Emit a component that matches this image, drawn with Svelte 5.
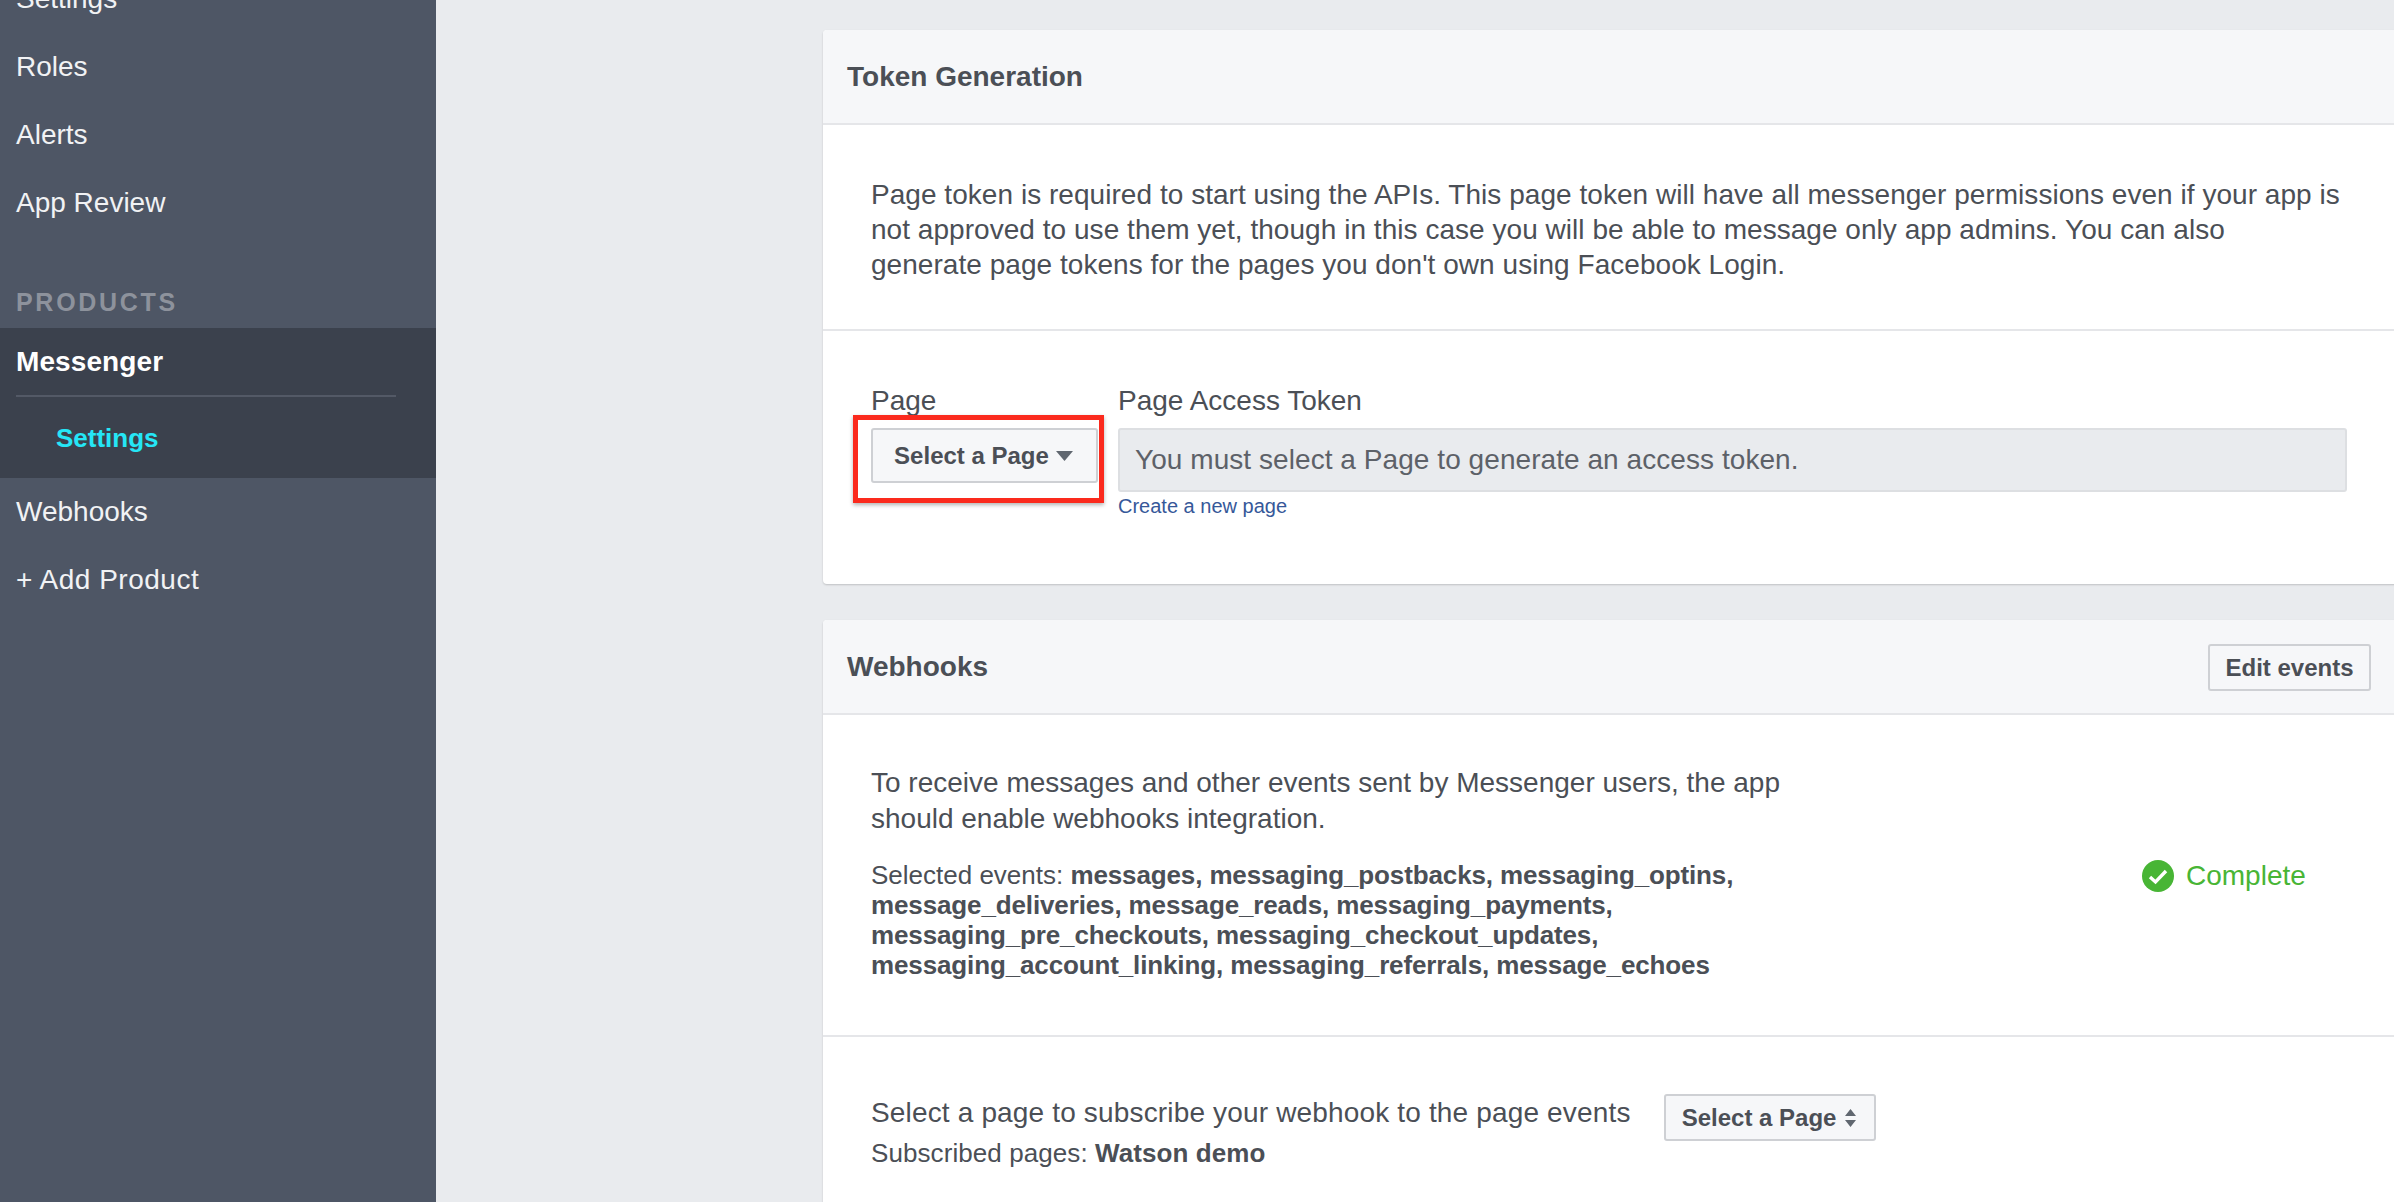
<script>
  const navTop = ['Settings', 'Roles', 'Alerts', 'App Review'];
  const navBottom = ['Webhooks', '+ Add Product'];
</script>

<div class="page">
  <aside class="sidebar">
    <ul class="nav nav-top">
      {#each navTop as item}
        <li>{item}</li>
      {/each}
    </ul>
    <div class="nav-heading">PRODUCTS</div>
    <div class="active-group">
      <div class="active-title">Messenger</div>
      <div class="active-sub">Settings</div>
    </div>
    <ul class="nav nav-bottom">
      {#each navBottom as item}
        <li>{item}</li>
      {/each}
    </ul>
  </aside>

  <main class="main">
    <section class="card token-card">
      <header class="card-head">
        <h2>Token Generation</h2>
      </header>
      <div class="intro">
        <p>Page token is required to start using the APIs. This page token will have all messenger permissions even if your app is not approved to use them yet, though in this case you will be able to message only app admins. You can also generate page tokens for the pages you don't own using Facebook Login.</p>
      </div>
      <div class="token-row">
        <div class="page-col">
          <div class="field-label">Page</div>
          <div class="marked">
            <button class="btn select-main">
              Select a Page
              <svg width="17" height="10" viewBox="0 0 17 10"><path d="M0 0h17L8.5 10z" fill="#606770" /></svg>
            </button>
            <span class="red-mark"></span>
          </div>
        </div>
        <div class="token-col">
          <div class="field-label">Page Access Token</div>
          <div class="token-input">You must select a Page to generate an access token.</div>
          <a class="new-page" href="#new">Create a new page</a>
        </div>
      </div>
    </section>

    <section class="card hooks-card">
      <header class="card-head">
        <h2>Webhooks</h2>
        <button class="btn edit">Edit events</button>
      </header>
      <div class="hooks-info">
        <div class="hooks-text">
          <p class="lead">To receive messages and other events sent by Messenger users, the app should enable webhooks integration.</p>
          <p class="events">Selected events: <b>messages, messaging_postbacks, messaging_optins, message_deliveries, message_reads, messaging_payments, messaging_pre_checkouts, messaging_checkout_updates, messaging_account_linking, messaging_referrals, message_echoes</b></p>
        </div>
        <div class="status">
          <svg width="32" height="32" viewBox="0 0 32 32">
            <circle cx="16" cy="16" r="16" fill="#48b535" />
            <path d="M8 17l5.5 5L24 11" fill="none" stroke="#fff" stroke-width="3.4" />
          </svg>
          <span>Complete</span>
        </div>
      </div>
      <div class="subscribe">
        <div class="subscribe-text">
          <div class="subscribe-line">Select a page to subscribe your webhook to the page events</div>
          <p class="subscribed">Subscribed pages: <b>Watson demo</b></p>
        </div>
        <button class="btn select-small">
          Select a Page
          <svg width="13" height="18" viewBox="0 0 13 18"><path d="M6.5 0l5.5 7H1zM6.5 18L1 11h11z" fill="#606770" /></svg>
        </button>
      </div>
    </section>
  </main>
</div>

<style>
  :global(body) {
    margin: 0;
    overflow: hidden;
  }

  .page {
    display: flex;
    width: 2394px;
    height: 1202px;
    overflow: hidden;
    background: #e9ebee;
    color: #4b4f56;
    font-family: "Liberation Sans", Arial, sans-serif;
  }

  .sidebar {
    flex: 0 0 436px;
    background: #4e5665;
    color: #f1f2f4;
    font-size: 28px;
    overflow: hidden;
  }

  .nav {
    margin: 0;
    padding: 0;
    list-style: none;
  }

  .nav-top {
    margin-top: -35px;
  }

  .nav li {
    display: flex;
    align-items: center;
    height: 68px;
    padding-left: 16px;
  }

  .nav-bottom li:last-child {
    letter-spacing: 0.5px;
  }

  .nav-heading {
    margin-top: 50px;
    padding-left: 16px;
    height: 41px;
    font-size: 25px;
    line-height: 30px;
    font-weight: 700;
    letter-spacing: 2.7px;
    color: #8d929c;
  }

  .active-group {
    background: #3b414d;
    height: 150px;
  }

  .active-title {
    margin: 0 40px 0 16px;
    height: 67px;
    line-height: 68px;
    font-weight: 700;
    letter-spacing: 0.1px;
    color: #fff;
    border-bottom: 2px solid #535966;
  }

  .active-sub {
    padding-left: 56px;
    margin-top: 26px;
    font-size: 26px;
    line-height: 30px;
    font-weight: 700;
    color: #25e6f6;
  }

  .main {
    flex: 0 0 auto;
    padding: 30px 0 0 387px;
  }

  .card {
    width: 1575px;
    background: #fff;
    border-radius: 4px 0 0 4px;
    box-shadow: 0 1px 2px rgba(0, 0, 0, 0.18);
  }

  .token-card {
    margin-bottom: 36px;
  }

  .hooks-card {
    min-height: 700px;
  }

  .card-head {
    display: flex;
    align-items: center;
    justify-content: space-between;
    box-sizing: border-box;
    height: 95px;
    padding: 0 27px 0 24px;
    background: #f6f7f9;
    border-bottom: 2px solid #e5e6e9;
    border-radius: 4px 0 0 0;
  }

  .card-head h2 {
    margin: 0;
    font-size: 28px;
    font-weight: 700;
    color: #4b4f56;
  }

  .intro {
    box-sizing: border-box;
    height: 206px;
    padding: 52px 24px 0 48px;
    border-bottom: 2px solid #e5e6e9;
  }

  .intro p {
    width: 1472px;
    margin: 0;
    font-size: 28px;
    line-height: 35px;
    letter-spacing: 0.04px;
  }

  .token-row {
    display: flex;
    box-sizing: border-box;
    height: 253px;
    padding: 52px 0 0 48px;
  }

  .page-col {
    width: 247px;
  }

  .field-label {
    height: 45px;
    font-size: 28px;
    line-height: 36px;
  }

  .marked {
    position: relative;
    width: 227px;
  }

  .btn {
    box-sizing: border-box;
    display: flex;
    align-items: center;
    justify-content: center;
    padding: 0;
    background: #f6f7f9;
    border: 2px solid #ced0d4;
    border-radius: 3px;
    font-family: inherit;
    font-size: 24px;
    font-weight: 700;
    color: #4b4f56;
  }

  .select-main {
    width: 227px;
    height: 55px;
    gap: 7px;
    padding-right: 2px;
  }

  .red-mark {
    position: absolute;
    left: -18px;
    top: -13px;
    width: 251px;
    height: 88px;
    box-sizing: border-box;
    border: 5px solid #fb2a1d;
    box-shadow: 0 2px 4px rgba(0, 0, 0, 0.3);
  }

  .token-col {
    width: 1229px;
  }

  .token-input {
    box-sizing: border-box;
    height: 64px;
    padding: 0 15px;
    line-height: 60px;
    font-size: 28px;
    letter-spacing: 0.06px;
    background: #e9ebee;
    border: 2px solid #dddfe2;
    border-radius: 3px;
    color: #5d6168;
  }

  .new-page {
    display: block;
    margin-top: 1px;
    font-size: 20px;
    line-height: 26px;
    color: #365899;
    text-decoration: none;
  }

  .edit {
    width: 163px;
    height: 47px;
    margin-top: 2px;
  }

  .hooks-info {
    display: flex;
    box-sizing: border-box;
    height: 322px;
    padding: 50px 0 0 48px;
    border-bottom: 2px solid #e5e6e9;
  }

  .hooks-text {
    width: 915px;
  }

  .lead {
    margin: 0 0 23px;
    font-size: 28px;
    line-height: 36px;
  }

  .events {
    margin: 0;
    font-size: 26px;
    line-height: 30px;
  }

  .events b {
    letter-spacing: -0.13px;
  }

  .status {
    display: flex;
    align-items: center;
    gap: 12px;
    height: 32px;
    margin: 95px 0 0 356px;
    font-size: 28px;
    color: #48b535;
  }

  .subscribe {
    display: flex;
    align-items: flex-start;
    padding: 57px 0 0 48px;
  }

  .subscribe-line {
    font-size: 28px;
    line-height: 38px;
    letter-spacing: 0.16px;
  }

  .select-small {
    width: 212px;
    height: 47px;
    gap: 8px;
    margin-left: 33px;
  }

  .subscribed {
    margin: 0;
    font-size: 26px;
    line-height: 42px;
    letter-spacing: 0.08px;
  }
</style>
